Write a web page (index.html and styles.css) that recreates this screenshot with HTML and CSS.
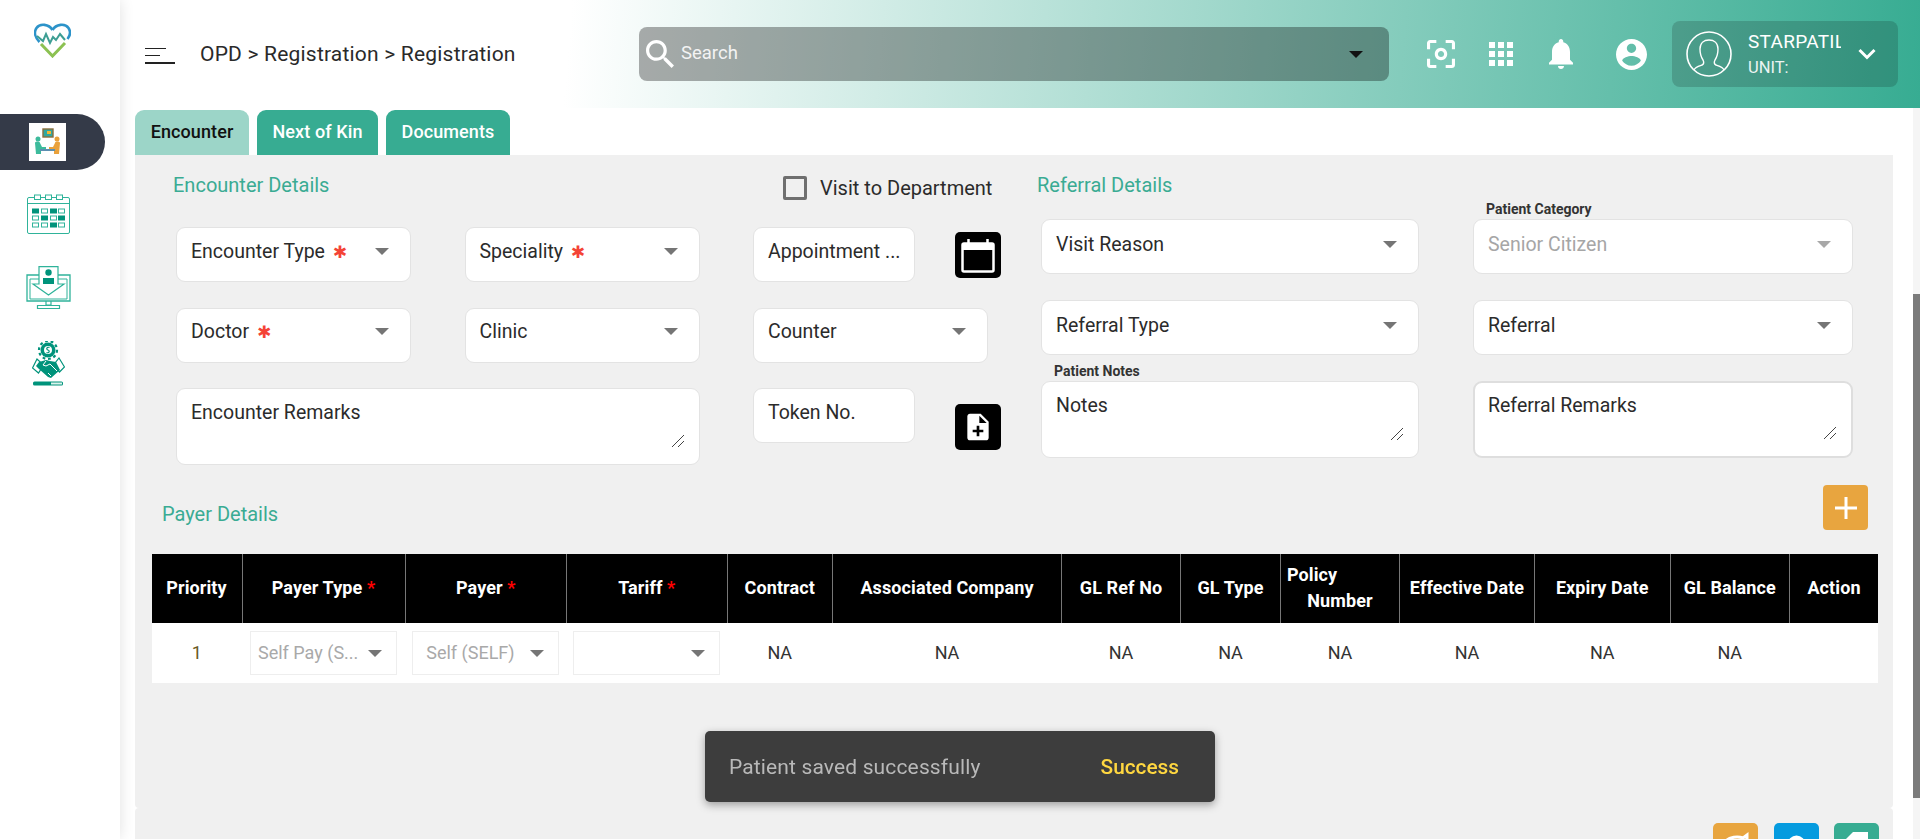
FILE: index.html
```html
<!DOCTYPE html>
<html lang="en">
<head>
  <meta charset="UTF-8">
  <meta name="viewport" content="width=device-width, initial-scale=1.0">
  <title>OPD Registration</title>
  <link rel="stylesheet" href="styles.css">
</head>
<body>
  <aside class="sidebar">
    <svg class="logo" viewBox="0 0 37 35">
      <path d="M18.500 7C15 1 6 0 2.500 5c-3 4.500-1 10 3 14" fill="none" stroke="#2c93c9" stroke-width="2.600"/>
      <path d="M18.500 7C22 1 31 0 34.500 5c2.500 4 1.500 8 -1 11" fill="none" stroke="#2c93c9" stroke-width="2.600"/>
      <path d="M3 13l6 5 3-7 4 9 3-6 3 3 4-6 5 6" fill="none" stroke="#3d9e93" stroke-width="2"/>
      <path d="M7 21l11.500 12L31 20" fill="none" stroke="#8cc152" stroke-width="3"/>
    </svg>
    <nav class="side-nav">
      <div class="side-item active">
        <div class="side-thumb">
          <svg viewBox="0 0 37 38" width="37" height="38">
            <rect x="14" y="6" width="10" height="8" fill="#2fa7a0" stroke="#8a6d3b" stroke-width="1.400"/>
            <rect x="18" y="8" width="4" height="3" fill="#f2b632"/>
            <circle cx="9" cy="16" r="2.500" fill="#3dbb9c"/>
            <circle cx="28" cy="16" r="2.500" fill="#e9a13b"/>
            <path d="M6 20c0-2 5-2 5 0l2 4h4v2h-5v5H7z" fill="#3dbb9c"/>
            <path d="M31 20c0-2-5-2-5 0l-2 4h-4v2h5v5h5z" fill="#e9a13b"/>
            <rect x="11" y="26" width="15" height="2" fill="#5b8fb0"/>
          </svg>
        </div>
      </div>
      <div class="side-item">
        <svg viewBox="0 0 43 40" width="43" height="40">
          <rect x="0.500" y="3.500" width="42" height="36" rx="1.500" fill="none" stroke="#2fb39a"/>
          <path d="M0.500 9.500h42" stroke="#2fb39a"/>
          <g fill="#fff" stroke="#2fb39a"><rect x="7.500" y="1" width="6" height="4.500"/><rect x="18.500" y="1" width="6" height="4.500"/><rect x="29.500" y="1" width="6" height="4.500"/></g>
          <g fill="none" stroke="#2fb39a">
            <rect x="14.500" y="15" width="6" height="4"/><rect x="31.500" y="15" width="6" height="4"/>
            <rect x="5.500" y="22" width="6" height="4"/><rect x="23.500" y="22" width="6" height="4"/>
            <rect x="5.500" y="29" width="6" height="4"/><rect x="14.500" y="29" width="6" height="4"/><rect x="31.500" y="29" width="6" height="4"/>
          </g>
          <g fill="#00937b">
            <rect x="5" y="14.500" width="7" height="5"/><rect x="23" y="14.500" width="7" height="5"/>
            <rect x="14" y="21.500" width="7" height="5"/><rect x="31" y="21.500" width="7" height="5"/>
            <rect x="23" y="28.500" width="7" height="5"/>
          </g>
        </svg>
      </div>
      <div class="side-item">
        <svg viewBox="0 0 45 45" width="45" height="45">
          <path d="M13 9H1v26h43V9H32" fill="none" stroke="#2fb39a" stroke-width="1.300"/>
          <path d="M13 13H4v20h37V13h-9" fill="none" stroke="#2fb39a"/>
          <path d="M13 18V0.700h19V18h6L22.500 29 7 18z" fill="#fff" stroke="#2fb39a" stroke-width="1.200"/>
          <circle cx="22.500" cy="6.500" r="3.200" fill="#00937b"/>
          <path d="M17 18v-6h11v6z" fill="#00937b"/>
          <path d="M20 35v4h5v-4M11.500 39.500h22v3h-22z" fill="none" stroke="#2fb39a" stroke-width="1.200"/>
        </svg>
      </div>
      <div class="side-item">
        <svg viewBox="0 0 33 45" width="33" height="45">
          <circle cx="16" cy="9" r="7.500" fill="#00937b"/>
          <circle cx="16" cy="9" r="9" fill="none" stroke="#00937b" stroke-width="2.200" stroke-dasharray="2.800 2.800"/>
          <circle cx="16" cy="9" r="4" fill="#fff"/>
          <path d="M17.500 6.500c-3-1-3.500 2-1.500 2.500s1.500 3.500-1.500 2.500" fill="none" stroke="#00937b" stroke-width="1.200"/>
          <path d="M5 18L0.500 27l6 5 5-8z" fill="#fff" stroke="#00937b" stroke-width="1.200"/>
          <path d="M27 17l5.500 9-5 5-6-7z" fill="#fff" stroke="#00937b" stroke-width="1.200"/>
          <path d="M7 21l7-2 4 1 6 1 4 8-9 8-3-1-9-8-3-3z" fill="#00937b"/>
          <path d="M14 20l-3 4 3 1 4-2 7 7M16 37l-3-3M19 35l-3-3" fill="none" stroke="#fff" stroke-width="1"/>
          <rect x="1" y="40.500" width="30" height="4" rx="1.500" fill="#00937b"/>
          <rect x="19" y="41.500" width="11" height="2" fill="#d9f3ec"/>
        </svg>
      </div>
    </nav>
  </aside>

  <div class="main">
    <header class="topbar">
      <div class="top-left">
        <div class="burger"><i class="b1"></i><i class="b2"></i><i class="b3"></i></div>
        <div class="crumb">OPD &gt; Registration &gt; Registration</div>
      </div>
      <div class="search">
        <svg viewBox="3 3 17.500 17.500" width="28" height="28"><path fill="#fff" d="M15.500 14h-.79l-.28-.27C15.410 12.590 16 11.110 16 9.500 16 5.910 13.090 3 9.500 3S3 5.910 3 9.500 5.910 16 9.500 16c1.610 0 3.090-.59 4.230-1.570l.27.28v.79l5 4.990L20.490 19l-4.990-5zm-6 0C7.010 14 5 11.990 5 9.500S7.010 5 9.500 5 14 7.010 14 9.500 11.990 14 9.500 14z"/></svg>
        <span class="search-text">Search</span>
        <i class="search-caret"></i>
      </div>
      <svg class="ti ti-scan" viewBox="3 3 18 18"><path fill="#fff" d="M5 15H3v4c0 1.100.9 2 2 2h4v-2H5v-4zM5 5h4V3H5c-1.100 0-2 .9-2 2v4h2V5zm14-2h-4v2h4v4h2V5c0-1.100-.9-2-2-2zm0 16h-4v2h4c1.100 0 2-.9 2-2v-4h-2v4zM12 8c-2.210 0-4 1.790-4 4s1.790 4 4 4 4-1.790 4-4-1.790-4-4-4zm0 6c-1.100 0-2-.9-2-2s.9-2 2-2 2 .9 2 2-.9 2-2 2z"/></svg>
      <svg class="ti ti-apps" viewBox="4 4 16 16"><path fill="#fff" d="M4 8h4V4H4v4zm6 12h4v-4h-4v4zm-6 0h4v-4H4v4zm0-6h4v-4H4v4zm6 0h4v-4h-4v4zm6-10v4h4V4h-4zm-6 4h4V4h-4v4zm6 6h4v-4h-4v4zm0 6h4v-4h-4v4z"/></svg>
      <svg class="ti ti-bell" viewBox="4 2.500 16 19.500" preserveAspectRatio="none"><path fill="#fff" d="M12 22c1.100 0 2-.9 2-2h-4c0 1.100.89 2 2 2zm6-6v-5c0-3.070-1.640-5.640-4.500-6.320V4c0-.83-.67-1.500-1.500-1.500s-1.500.67-1.500 1.500v.68C7.630 5.360 6 7.920 6 11v5l-2 2v1h16v-1l-2-2z"/></svg>
      <svg class="ti ti-account" viewBox="2 2 20 20"><path fill="#fff" d="M12 2C6.480 2 2 6.480 2 12s4.480 10 10 10 10-4.480 10-10S17.520 2 12 2zm0 3c1.660 0 3 1.340 3 3s-1.340 3-3 3-3-1.340-3-3 1.340-3 3-3zm0 14.200c-2.500 0-4.710-1.280-6-3.220.03-1.990 4-3.080 6-3.080 1.990 0 5.970 1.090 6 3.080-1.290 1.940-3.500 3.220-6 3.220z"/></svg>
      <div class="userbox">
        <svg class="avatar" viewBox="0 0 46 46" width="46" height="46">
          <circle cx="23" cy="23" r="22" fill="none" stroke="#fff" stroke-width="1.600"/>
          <path d="M8 39c1-3 5-4 8-5 2-1 2-3 1-5-2-3-3-7-3-11 0-6 4-9 9-9s9 3 9 9c0 4-1 8-3 11-1 2-1 4 1 5 3 1 7 2 8 5" fill="none" stroke="#fff" stroke-width="1.400"/>
        </svg>
        <div class="user-text">
          <div class="user-name">STARPATIL</div>
          <div class="user-unit">UNIT:</div>
        </div>
        <svg class="user-chev" viewBox="0 0 18 12" width="18" height="12"><path d="M1.500 2l7.500 7.500L16.500 2" fill="none" stroke="#fff" stroke-width="3"/></svg>
      </div>
    </header>

    <div class="content">
      <div class="tabs">
        <div class="tab tab-active">Encounter</div>
        <div class="tab tab-kin">Next of Kin</div>
        <div class="tab tab-docs">Documents</div>
      </div>

      <section class="panel">
        <div class="details">
          <div class="enc">
            <div class="enc-head">
              <h3 class="sec-title enc-title">Encounter Details</h3>
              <label class="check"><i class="check-box"></i>Visit to Department</label>
            </div>
            <div class="enc-grid">
              <div class="field"><span>Encounter Type <b class="star">✱</b></span><i class="caret"></i></div>
              <div class="field"><span>Speciality <b class="star">✱</b></span><i class="caret"></i></div>
              <div class="cell">
                <div class="field field-short"><span>Appointment ...</span></div>
                <div class="square-btn">
                  <svg viewBox="0 0 46 46" width="46" height="46">
                    <path d="M9 11.500h28a1.500 1.500 0 0 1 1.500 1.500v25a1.500 1.500 0 0 1-1.500 1.500H9A1.500 1.500 0 0 1 7.500 38V13A1.500 1.500 0 0 1 9 11.500z" fill="#000" stroke="#fff" stroke-width="2.500"/>
                    <path d="M7.500 13a2 2 0 0 1 2-2h27a2 2 0 0 1 2 2v5h-31z" fill="#fff"/>
                    <path d="M13.500 7v5M32.500 7v5" stroke="#fff" stroke-width="2.500"/>
                  </svg>
                </div>
              </div>
              <div class="field field-row2"><span>Doctor <b class="star">✱</b></span><i class="caret"></i></div>
              <div class="field field-row2"><span>Clinic</span><i class="caret"></i></div>
              <div class="field field-row2 field-counter"><span>Counter</span><i class="caret"></i></div>
              <div class="field field-area span2"><span>Encounter Remarks</span><i class="grip"></i></div>
              <div class="cell cell-token">
                <div class="field field-short"><span>Token No.</span></div>
                <div class="square-btn btn-low">
                  <svg viewBox="0 0 24 24" width="46" height="46" class="note-ic"><path fill="#fff" d="M14 2H6c-1.100 0-1.990.9-1.990 2L4 20c0 1.100.89 2 1.990 2H18c1.100 0 2-.9 2-2V8l-6-6zm2 14h-3v3h-2v-3H8v-2h3v-3h2v3h3v2zm-3-7V3.500L18.500 9H13z"/></svg>
                </div>
              </div>
            </div>
          </div>

          <div class="ref">
            <h3 class="sec-title ref-title">Referral Details</h3>
            <div class="ref-grid">
              <div class="field field-low"><span>Visit Reason</span><i class="caret"></i></div>
              <div class="field field-low">
                <span class="float-label">Patient Category</span>
                <span class="muted">Senior Citizen</span><i class="caret caret-light"></i>
              </div>
              <div class="field field-low"><span>Referral Type</span><i class="caret"></i></div>
              <div class="field field-low"><span>Referral</span><i class="caret"></i></div>
              <div class="field field-area">
                <span class="float-label">Patient Notes</span>
                <span>Notes</span><i class="grip"></i>
              </div>
              <div class="field field-area field-focus"><span>Referral Remarks</span><i class="grip"></i></div>
            </div>
          </div>
        </div>

        <div class="payer-head">
          <h3 class="sec-title payer-title">Payer Details</h3>
          <div class="add-btn">
            <svg viewBox="0 0 24 24" width="24" height="24"><path d="M12 1v22M1 12h22" stroke="#fff" stroke-width="3"/></svg>
          </div>
        </div>

        <table class="payer-table">
          <colgroup>
            <col class="c1"><col class="c2"><col class="c3"><col class="c4"><col class="c5"><col class="c6"><col class="c7">
            <col class="c8"><col class="c9"><col class="c10"><col class="c11"><col class="c12"><col class="c13">
          </colgroup>
          <thead>
            <tr>
              <th>Priority</th>
              <th>Payer Type <em>*</em></th>
              <th>Payer <em>*</em></th>
              <th>Tariff <em>*</em></th>
              <th>Contract</th>
              <th>Associated Company</th>
              <th>GL Ref No</th>
              <th>GL Type</th>
              <th><span class="policy-1">Policy</span>Number</th>
              <th>Effective Date</th>
              <th>Expiry Date</th>
              <th>GL Balance</th>
              <th>Action</th>
            </tr>
          </thead>
          <tbody>
            <tr>
              <td class="num">1</td>
              <td><div class="mini-select sel-type"><span>Self Pay (S...</span><i class="caret"></i></div></td>
              <td><div class="mini-select sel-payer"><span>Self (SELF)</span><i class="caret"></i></div></td>
              <td><div class="mini-select"><span></span><i class="caret"></i></div></td>
              <td>NA</td>
              <td>NA</td>
              <td>NA</td>
              <td>NA</td>
              <td>NA</td>
              <td>NA</td>
              <td>NA</td>
              <td>NA</td>
              <td></td>
            </tr>
          </tbody>
        </table>
      </section>

      <section class="panel-foot">
        <div class="foot-btn foot-orange">
          <svg viewBox="0 0 45 45" width="45" height="45"><path d="M13 18c3-4 12-5 17-3l4-3v9" fill="none" stroke="#fff" stroke-width="3"/></svg>
        </div>
        <div class="foot-btn foot-blue">
          <svg viewBox="0 0 45 45" width="45" height="45"><circle cx="22.500" cy="21.500" r="9" fill="#fff"/></svg>
        </div>
        <div class="foot-btn foot-teal">
          <svg viewBox="0 0 45 45" width="45" height="45"><path d="M12 16l7-7h15v27H12z" fill="#fff"/></svg>
        </div>
      </section>
    </div>
  </div>

  <div class="scroll-track"><div class="scroll-thumb"></div></div>

  <div class="toast">
    <span class="toast-msg">Patient saved successfully</span>
    <span class="toast-action">Success</span>
  </div>
</body>
</html>
```

FILE: styles.css
```css
* {
  box-sizing: border-box;
}
html, body {
  margin: 0;
  height: 839px;
  overflow: hidden;
}
body {
  display: flex;
  font-family: Roboto, "Liberation Sans", sans-serif;
  background-color: #fff;
  color: #2b2b2b;
}
i, em {
  font-style: normal;
}

/* sidebar */
.sidebar {
  width: 120px;
  flex: none;
  height: 839px;
  background-color: #fff;
  box-shadow: 0 0 14px rgba(0, 0, 0, 0.12);
  position: relative;
  z-index: 2;
}
.logo {
  display: block;
  width: 37px;
  height: 35px;
  margin: 23px 0 0 34px;
}
.side-nav {
  margin-top: 56px;
}
.side-item {
  display: flex;
  padding-left: 27px;
  margin-bottom: 32px;
}
.side-item:nth-child(3) {
  padding-left: 26px;
  margin-bottom: 30px;
}
.side-item:nth-child(4) {
  padding-left: 32px;
}
.side-item.active {
  width: 105px;
  height: 56px;
  margin-bottom: 24px;
  padding: 9px 0 0 29px;
  background-color: #343a48;
  border-radius: 0 30px 30px 0;
}
.side-thumb {
  width: 37px;
  height: 38px;
  background-color: #fff;
}
.side-thumb svg {
  display: block;
}

/* top bar */
.main {
  width: 1800px;
  flex: none;
}
.topbar {
  height: 108px;
  display: flex;
  align-items: center;
  background: linear-gradient(95deg, #fff 25%, #37ac92 100%);
}
.top-left {
  width: 519px;
  flex: none;
  display: flex;
  align-items: center;
  padding-left: 25px;
}
.burger {
  width: 30px;
  height: 16px;
  margin-top: 3px;
  position: relative;
  display: flex;
  flex-direction: column;
  justify-content: space-between;
}
.burger i {
  display: block;
  height: 1.500px;
  background-color: #222;
}
.b1 { width: 21px; }
.b2 { width: 15px; }
.b3 { width: 30px; }
.crumb {
  margin-left: 25px;
  font-size: 21px;
  letter-spacing: 0.2px;
  color: #2a2a2a;
}
.search {
  width: 750px;
  height: 54px;
  flex: none;
  display: flex;
  align-items: center;
  padding: 0 26px 0 7px;
  background-color: rgba(0, 0, 0, 0.32);
  border-radius: 8px;
}
.search-text {
  margin-left: 7px;
  margin-top: -2px;
  font-size: 18.500px;
  color: #f3f3f3;
  flex: 1;
}
.search-caret {
  width: 0;
  height: 0;
  border-left: 7px solid transparent;
  border-right: 7px solid transparent;
  border-top: 7px solid #111;
}
.ti {
  flex: none;
  display: block;
}
.ti-scan { width: 28px; height: 28px; margin-left: 38px; }
.ti-apps { width: 24px; height: 24px; margin-left: 34px; }
.ti-bell { width: 24px; height: 30px; margin-left: 36px; }
.ti-account { width: 31px; height: 31px; margin-left: 43px; }
.userbox {
  width: 226px;
  height: 66px;
  flex: none;
  margin-left: 25px;
  display: flex;
  align-items: center;
  padding-left: 14px;
  background-color: rgba(0, 0, 0, 0.16);
  border-radius: 8px;
  color: #fff;
}
.user-text {
  margin-left: 16px;
  width: 93px;
  overflow: hidden;
  margin-right: 17px;
  flex: none;
}
.user-name {
  font-size: 19px;
  letter-spacing: 0.3px;
  line-height: 24px;
  white-space: nowrap;
}
.user-unit {
  font-size: 16.500px;
  line-height: 22px;
  margin-top: 3px;
  opacity: 0.9;
}

/* main panel */
.content {
  padding: 2px 0 0 15px;
}
.tabs {
  display: flex;
  gap: 8px;
  height: 45px;
}
.tab {
  height: 45px;
  padding-top: 11px;
  font-size: 18px;
  font-weight: 500;
  letter-spacing: 0.1px;
  color: #fff;
  text-align: center;
  background-color: #37ac92;
  border-radius: 9px 9px 0 0;
}
.tab-active {
  width: 114px;
  color: #111;
  background-color: #9cd5c8;
}
.tab-kin { width: 121px; }
.tab-docs { width: 124px; }
.panel {
  width: 1758px;
  height: 653px;
  padding-top: 18px;
  background-color: #f0f0f0;
  border-radius: 0 0 4px 4px;
}
.details {
  display: flex;
  height: 294px;
}
.sec-title {
  margin: 0;
  font-size: 20px;
  font-weight: 400;
  line-height: 24px;
  color: #3aab93;
}
.enc {
  width: 902px;
  padding-left: 41px;
  flex: none;
}
.enc-head {
  display: flex;
  height: 54px;
  margin-left: -3px;
}
.enc-title {
  width: 610px;
  flex: none;
}
.check {
  display: flex;
  align-items: center;
  gap: 13px;
  height: 24px;
  margin-top: 3px;
  font-size: 20px;
}
.check-box {
  width: 24px;
  height: 24px;
  border: 3px solid #6f6f6f;
  border-radius: 2px;
}
.enc-grid {
  display: grid;
  grid-template-columns: 235px 235px 248px;
  grid-template-rows: 55px 55px 77px;
  column-gap: 53.500px;
  row-gap: 25.500px;
}
.span2 {
  grid-column: span 2;
}
.field {
  position: relative;
  display: flex;
  justify-content: space-between;
  align-items: flex-start;
  padding: 13px 21px 0 14px;
  background-color: #fff;
  border: 1px solid #e3e3e3;
  border-radius: 9px;
  font-size: 19.500px;
  line-height: 22px;
}
.field-row2 {
  padding-top: 12px;
}
.field-low {
  padding-top: 14px;
}
.field-short {
  width: 162px;
  height: 55px;
  flex: none;
  white-space: nowrap;
}
.field-counter {
  width: 235px;
}
.field-area {
  height: 77px;
}
.field-focus {
  padding: 12px 21px 0 13px;
  border: 2px solid #dedede;
}
.star {
  color: #f44336;
  font-family: "DejaVu Sans", sans-serif;
  font-size: 17px;
  font-weight: 400;
  line-height: 1;
  margin-left: 3px;
}
.caret {
  width: 0;
  height: 0;
  flex: none;
  margin-top: 7px;
  border-left: 7px solid transparent;
  border-right: 7px solid transparent;
  border-top: 7px solid #757575;
}
.caret-light {
  border-top-color: #a8a8a8;
}
.muted {
  color: #a6a6a6;
}
.grip {
  position: absolute;
  right: 15px;
  bottom: 17px;
  width: 12px;
  height: 12px;
  background: linear-gradient(135deg, transparent 46%, #444 46%, #444 53%, transparent 53%, transparent 72%, #444 72%, #444 79%, transparent 79%);
}
.float-label {
  position: absolute;
  left: 12px;
  top: -19px;
  font-size: 14px;
  font-weight: 700;
  line-height: 16px;
  color: #333;
}
.cell {
  display: flex;
  justify-content: space-between;
  align-items: center;
  height: 55px;
}
.cell-token {
  height: 77px;
  align-items: flex-start;
}
.square-btn {
  width: 46px;
  height: 46px;
  flex: none;
  background-color: #000;
  border-radius: 5px;
}
.square-btn svg {
  display: block;
}
.btn-low {
  margin-top: 16px;
}
.note-ic {
  padding: 7px;
}
.ref {
  width: 812px;
  flex: none;
}
.ref-title {
  height: 46px;
}
.ref-grid {
  display: grid;
  grid-template-columns: 378px 380px;
  grid-template-rows: 55px 55px 77px;
  column-gap: 54px;
  row-gap: 26px;
  margin-left: 4px;
}

/* payer */
.payer-head {
  display: flex;
  justify-content: space-between;
  padding: 18px 25px 0 27px;
  height: 63px;
}
.payer-title {
  margin-top: 17px;
}
.add-btn {
  width: 45px;
  height: 45px;
  display: flex;
  align-items: center;
  justify-content: center;
  background-color: #e8a53f;
  border-radius: 4px;
}
.payer-table {
  margin: 24px 0 0 16.500px;
  width: 1726.500px;
  table-layout: fixed;
  border-collapse: collapse;
  background-color: #fff;
}
.c1 { width: 90.500px; }
.c2 { width: 163px; }
.c3 { width: 161.500px; }
.c4 { width: 160.500px; }
.c5 { width: 105.500px; }
.c6 { width: 229px; }
.c7 { width: 119px; }
.c8 { width: 100px; }
.c9 { width: 119px; }
.c10 { width: 135px; }
.c11 { width: 135.500px; }
.c12 { width: 119.500px; }
.c13 { width: 88.500px; }
.payer-table th {
  height: 69px;
  padding: 0 0 1px;
  background-color: #000;
  color: #fff;
  font-size: 18px;
  font-weight: 700;
  letter-spacing: 0.1px;
  line-height: 26px;
  text-align: center;
  border-left: 1px solid #777;
}
.payer-table th:first-child {
  border-left: 0;
}
.payer-table th em {
  color: #f00;
}
.policy-1 {
  display: block;
  text-align: left;
  padding-left: 6px;
}
.payer-table td {
  height: 60px;
  padding: 0 0 2px;
  text-align: center;
  font-size: 18px;
  color: #333;
}
.payer-table td.num {
  color: #6b5a1e;
}
.mini-select {
  width: 147px;
  height: 44px;
  margin: 2px auto 0;
  display: flex;
  justify-content: space-between;
  align-items: center;
  padding: 0 14px 2px 8px;
  border: 1px solid #eee;
  font-size: 18px;
  color: #a9a9a9;
  white-space: nowrap;
}
.sel-type {
  padding-left: 7px;
}
.sel-payer {
  padding-left: 13px;
}
.mini-select .caret {
  margin-top: 2px;
}

/* bottom strip */
.panel-foot {
  width: 1758px;
  height: 40px;
  display: flex;
  justify-content: flex-end;
  gap: 15.500px;
  padding: 15px 14px 0 0;
  background-color: #f0f0f0;
  border-radius: 4px 4px 0 0;
}
.foot-btn {
  width: 45px;
  height: 45px;
  flex: none;
  border-radius: 5px;
}
.foot-orange { background-color: #e8a53f; }
.foot-blue { background-color: #059bdf; }
.foot-teal { background-color: #37ac92; }

/* overlays */
.scroll-track {
  position: fixed;
  top: 108px;
  right: 0;
  width: 7px;
  height: 731px;
  background-color: #f5f5f5;
}
.scroll-thumb {
  width: 7px;
  height: 504px;
  margin-top: 186px;
  background-color: #7b7b7b;
}
.toast {
  position: fixed;
  left: 705px;
  top: 731px;
  width: 510px;
  height: 71px;
  display: flex;
  align-items: center;
  justify-content: space-between;
  padding: 0 36px 0 24px;
  background-color: #3d3d3d;
  border-radius: 5px;
  box-shadow: 0 3px 8px rgba(0, 0, 0, 0.35);
  font-size: 21px;
}
.toast-msg {
  color: #b9b9b9;
  letter-spacing: 0.14px;
}
.toast-action {
  color: #ffd740;
  font-weight: 500;
  font-size: 20.800px;
}
```
